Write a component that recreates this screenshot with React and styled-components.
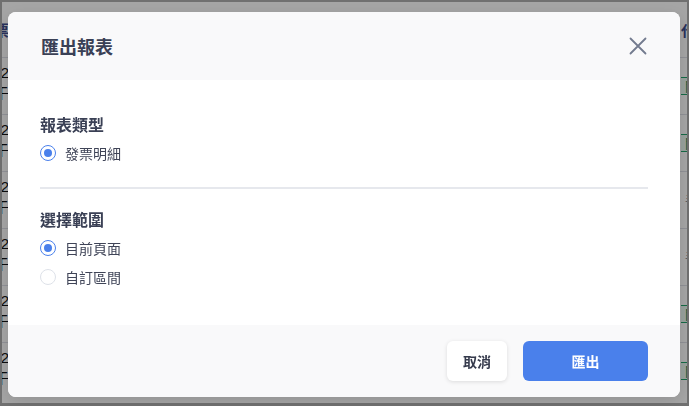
import styled, { createGlobalStyle } from 'styled-components';

const rows = [
  { date: '2024/02', time: '下午', tag: '開立', kind: 'green' },
  { date: '2024/02', time: '上午', tag: '開立', kind: 'green' },
  { date: '2024/02', time: '上午', tag: '手開', kind: 'gray' },
  { date: '2024/02', time: '下午', tag: '手開', kind: 'gray' },
  { date: '2024/02', time: '下午', tag: '開立', kind: 'green' },
  { date: '2024/02', time: '上午', tag: '開立', kind: 'green' },
];

const App = () => {
  return (
    <>
      <GlobalStyle />
      <Shell>
        <Page>
          <HeadRow>
            <LeftCell>
              <HeadText>發票</HeadText>
            </LeftCell>
            <div />
            <RightCell>
              <HeadText>代開</HeadText>
            </RightCell>
          </HeadRow>
          {rows.map((r, i) => (
            <Row key={i}>
              <LeftCell>
                <Lines>
                  <span>{r.date}</span>
                  <span>{r.time}</span>
                </Lines>
              </LeftCell>
              <div />
              <RightCell>
                <Tag kind={r.kind}>{r.tag}</Tag>
              </RightCell>
            </Row>
          ))}
        </Page>
      </Shell>

      <Overlay>
        <Modal>
          <Header>
            <Title>匯出報表</Title>
            <CloseButton aria-label='close'>
              <svg width='18' height='18' viewBox='0 0 18 18'>
                <path
                  d='M1.5 1.5L16.5 16.5M16.5 1.5L1.5 16.5'
                  stroke='#737b8f'
                  strokeWidth='1.8'
                  strokeLinecap='round'
                />
              </svg>
            </CloseButton>
          </Header>

          <Body>
            <Section>
              <SectionTitle>報表類型</SectionTitle>
              <Option>
                <Radio checked />
                <span>發票明細</span>
              </Option>
            </Section>
            <Divider />
            <Section>
              <SectionTitle>選擇範圍</SectionTitle>
              <Option>
                <Radio checked />
                <span>目前頁面</span>
              </Option>
              <Option>
                <Radio />
                <span>自訂區間</span>
              </Option>
            </Section>
          </Body>

          <Footer>
            <CancelButton>取消</CancelButton>
            <PrimaryButton>匯出</PrimaryButton>
          </Footer>
        </Modal>
      </Overlay>
    </>
  );
};

export default App;

const GlobalStyle = createGlobalStyle`
  html, body {
    margin: 0;
    padding: 0;
  }

  body {
    background: #adadad;
    font-family: "Noto Sans CJK TC", "Noto Sans", sans-serif;
  }
`;

const Shell = styled.div`
  height: 100vh;
  box-sizing: border-box;
  padding: 2px 2px 3px 2px;
  display: flex;
`;

const Page = styled.div`
  flex: 1;
  background: #fdfdfd;
  overflow: hidden;
  display: flex;
  flex-direction: column;
`;

const Row = styled.div`
  display: grid;
  grid-template-columns: 7px 1fr 6px;
  height: 57px;
  flex-shrink: 0;
  box-sizing: border-box;
  border-top: 1px solid #dcdee6;
`;

const HeadRow = styled(Row)`
  height: 55px;
  border-top: none;
`;

const LeftCell = styled.div`
  display: flex;
  align-items: center;
  justify-content: flex-end;
  white-space: nowrap;
`;

const RightCell = styled.div`
  display: flex;
  align-items: center;
  justify-content: flex-start;
  white-space: nowrap;
`;

const HeadText = styled.span`
  font-size: 15px;
  font-weight: 600;
  color: #3f4c8c;
`;

const Lines = styled.div`
  display: flex;
  flex-direction: column;
  align-items: flex-end;
  padding-bottom: 6px;
  font-family: "Liberation Sans", "Noto Sans CJK TC", sans-serif;
  font-size: 15px;
  line-height: 20px;
  color: #111;
`;

const Tag = styled.span`
  font-size: 13px;
  line-height: 16px;
  padding: 0 4px;
  border-top: 1px solid ${(p) => (p.kind === 'green' ? '#22a36c' : 'transparent')};
  border-bottom: 1px solid ${(p) => (p.kind === 'green' ? '#22a36c' : 'transparent')};
  color: ${(p) => (p.kind === 'green' ? '#10855a' : '#8a8f9c')};
  background: ${(p) => (p.kind === 'green' ? '#e9f8f0' : 'transparent')};
`;

const Overlay = styled.div`
  position: fixed;
  inset: 0;
  background: rgba(0, 0, 0, 0.35);
  display: flex;
  justify-content: flex-start;
  align-items: flex-start;
  padding: 12px 0 0 8px;
`;

const Modal = styled.div`
  width: 672px;
  background: #fff;
  border-radius: 8px;
  overflow: hidden;
  display: flex;
  flex-direction: column;
  box-shadow: 0 4px 16px rgba(0, 0, 0, 0.12);
`;

const Header = styled.div`
  height: 68px;
  box-sizing: border-box;
  padding: 0 33px;
  display: flex;
  align-items: center;
  justify-content: space-between;
  background: #f9f9fa;
`;

const Title = styled.h2`
  margin: 0;
  font-size: 18px;
  line-height: 24px;
  font-weight: 700;
  color: #3a4055;
`;

const CloseButton = styled.button`
  border: none;
  background: none;
  padding: 0;
  width: 18px;
  height: 18px;
  display: flex;
  cursor: pointer;
`;

const Body = styled.div`
  height: 245px;
  box-sizing: border-box;
  padding: 32px 32px 0 32px;
  display: flex;
  flex-direction: column;
`;

const Section = styled.div`
  display: flex;
  flex-direction: column;
`;

const SectionTitle = styled.div`
  font-size: 16px;
  line-height: 24px;
  font-weight: 600;
  color: #3a4055;
  margin-bottom: 2px;
`;

const Option = styled.label`
  display: flex;
  align-items: center;
  gap: 9px;
  height: 29px;
  font-size: 14px;
  color: #3f4457;
`;

const Radio = styled.span`
  width: 16px;
  height: 16px;
  box-sizing: border-box;
  border-radius: 50%;
  border: 1.5px solid ${(p) => (p.checked ? '#4a80eb' : '#dde1e8')};
  background: #fff;
  display: flex;
  align-items: center;
  justify-content: center;

  &::after {
    content: '';
    width: 8px;
    height: 8px;
    border-radius: 50%;
    background: ${(p) => (p.checked ? '#4a80eb' : 'transparent')};
  }
`;

const Divider = styled.div`
  height: 2px;
  background: #e6e8ed;
  margin: 20px 0 18px;
`;

const Footer = styled.div`
  height: 72px;
  box-sizing: border-box;
  padding: 16px 32px;
  display: flex;
  justify-content: flex-end;
  gap: 16px;
  background: #f9f9fa;
`;

const CancelButton = styled.button`
  width: 60px;
  height: 40px;
  border: none;
  border-radius: 6px;
  background: #fff;
  box-shadow: 0 1px 4px rgba(0, 0, 0, 0.12);
  font-family: inherit;
  font-size: 14px;
  font-weight: 700;
  color: #353a4c;
`;

const PrimaryButton = styled.button`
  width: 125px;
  height: 40px;
  border: none;
  border-radius: 6px;
  background: #4a80eb;
  font-family: inherit;
  font-size: 14px;
  font-weight: 700;
  color: #fff;
`;
